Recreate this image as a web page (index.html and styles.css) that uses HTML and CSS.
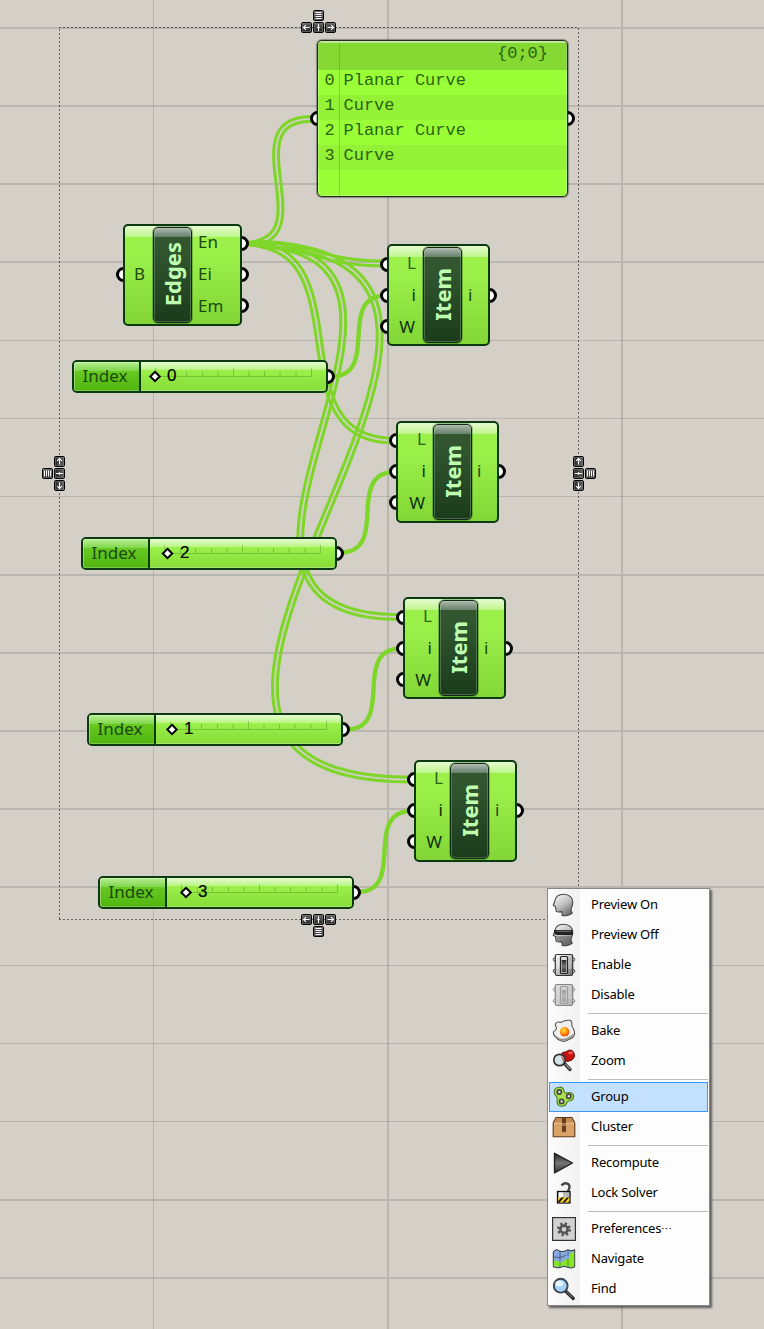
FILE: index.html
```html
<!DOCTYPE html>
<html lang="en">
<head>
<meta charset="utf-8">
<title>Definition canvas</title>
<link rel="stylesheet" href="styles.css">
</head>
<body>
<svg class="defs" width="0" height="0" aria-hidden="true">
  <defs>
    <linearGradient id="keyfill" x1="0" y1="0" x2="0" y2="1"><stop offset="0" stop-color="#6a6a6a"/><stop offset="1" stop-color="#222"/></linearGradient>
    <linearGradient id="grey" x1="0" y1="0" x2="1" y2="1"><stop offset="0" stop-color="#fff"/><stop offset=".4" stop-color="#cfcfcf"/><stop offset="1" stop-color="#6e6e6e"/></linearGradient>
    <linearGradient id="skin" x1=".2" y1="0" x2=".8" y2="1"><stop offset="0" stop-color="#f4f4f4"/><stop offset=".45" stop-color="#c4c4c4"/><stop offset="1" stop-color="#666"/></linearGradient>
    <linearGradient id="dark" x1="0" y1="0" x2="0" y2="1"><stop offset="0" stop-color="#222"/><stop offset=".5" stop-color="#777"/><stop offset="1" stop-color="#333"/></linearGradient>
    <radialGradient id="yolk" cx=".4" cy=".35" r=".65"><stop offset="0" stop-color="#ffe13a"/><stop offset=".5" stop-color="#ff9a10"/><stop offset="1" stop-color="#f04a08"/></radialGradient>
    <g id="key"><rect x=".5" y=".5" width="10" height="10" rx="1.2" fill="url(#keyfill)" stroke="#000"/><rect x="1.5" y="1.5" width="8" height="8" fill="none" stroke="#777" stroke-width=".6"/></g>
    <g id="arrow" fill="none" stroke="#fff" stroke-width="1.1"><path d="M2.5 5.5H8.5M4.9 3.1L2.5 5.5L4.9 7.9"/></g>
    <g id="bars" stroke="#fff" stroke-width="1"><path d="M2.5 2.5H8.5M2.5 4.5H8.5M2.5 6.5H8.5M2.5 8.5H8.5"/></g>
    <g id="plus"><path d="M5.5 2V9" stroke="#fff"/><path d="M4.2 5.5H6.8" stroke="#fff" stroke-width="1.2"/></g>
    <g id="keys">
      <use href="#key"/><use href="#arrow"/>
      <use href="#key" x="12"/><use href="#plus" x="12"/>
      <use href="#key" x="24"/><use href="#arrow" transform="translate(35 0) scale(-1 1)"/>
    </g>
    <g id="ruler" fill="none" stroke="#3c7a12" stroke-opacity=".34">
      <path d="M.5 9.5H156.5M.5 9V1M78.5 9V1M156.5 9V1M16.5 9V4M31.5 9V4M47.5 9V4M63 9V4M94 9V4M109.5 9V4M125 9V4M141 9V4"/>
    </g>
    <g id="head"><path d="M2.5 9C3.2 4 6.5 1.2 11.5 1.2C17.5 1.2 21 5 20.8 9.8C20.6 13.5 18.8 15 19 17.5L20.3 20.2C17.5 22.8 12.8 23.2 10.2 22.4L9.8 18.6C8 19 5.5 19.4 4.2 18.3L3.4 13.5L1.3 12.3Z" fill="url(#skin)" stroke="#444" stroke-width="1.1"/></g>
    <g id="chip"><circle cx="2.8" cy="6.5" r="1.6" fill="#eee" stroke="#444"/><circle cx="2.8" cy="18" r="1.6" fill="#eee" stroke="#444"/><circle cx="21.2" cy="6.5" r="1.6" fill="#eee" stroke="#444"/><circle cx="21.2" cy="18" r="1.6" fill="#eee" stroke="#444"/><rect x="3.3" y="1.5" width="17.4" height="21" rx="1.8" fill="url(#grey)" stroke="#333" stroke-width="1.2"/><path d="M4.8 7.5H19.2V16H4.8Z" fill="#fff" opacity=".25"/><rect x="8.5" y="3.5" width="7" height="17" rx="1" fill="#ddd" stroke="#222" stroke-width="1.2"/><rect x="9.7" y="7" width="4.6" height="12.3" fill="url(#dark)"/></g>
  </defs>
</svg>

<main class="canvas">
  <svg class="layer" width="764" height="1329" viewBox="0 0 764 1329">
    <g class="grid">
      <path class="thin" d="M153.5 0V1329M0 340.5H764M0 418.5H764M0 496.5H764M0 965.5H764M0 1043.5H764M0 1121.5H764"/>
      <path class="thick" d="M388 0V1329M622 0V1329M0 28H764M0 106H764M0 184H764M0 262H764M0 575H764M0 653H764M0 731H764M0 809H764M0 887H764M0 1200H764M0 1278H764"/>
    </g>
    <path class="marquee" d="M59 27.5H579M59 919.5H579M59.5 29V919M578.5 28V919"/>
    <g id="wires"></g>
    <use href="#keys" x="301" y="22"/><use href="#key" x="313" y="10"/><use href="#bars" x="313" y="10"/>
    <use href="#keys" x="301" y="914"/><use href="#key" x="313" y="926"/><use href="#bars" x="313" y="926"/>
    <use href="#keys" transform="translate(65 456) rotate(90)"/><use href="#key" x="42" y="468"/><use href="#bars" transform="translate(53 468) rotate(90)"/>
    <use href="#keys" transform="translate(584 456) rotate(90)"/><use href="#key" x="585" y="468"/><use href="#bars" transform="translate(596 468) rotate(90)"/>
  </svg>

  <section class="node panel">
    <i class="port in mid"></i><i class="port out mid"></i>
    <div class="sheet">
      <div class="path">{0;0}</div>
      <div class="row"><span class="no">0</span><span>Planar Curve</span></div>
      <div class="row alt"><span class="no">1</span><span>Curve</span></div>
      <div class="row"><span class="no">2</span><span>Planar Curve</span></div>
      <div class="row alt"><span class="no">3</span><span>Curve</span></div>
    </div>
  </section>

  <section class="node comp edges">
    <i class="port in mid"></i><i class="port out p1"></i><i class="port out mid"></i><i class="port out p3"></i>
    <div class="body"><div class="ins"><span>B</span></div><div class="name"><b>Edges</b></div><div class="outs"><span>En</span><span>Ei</span><span>Em</span></div></div>
  </section>

  <section class="node comp item n1">
    <i class="port in p1"></i><i class="port in mid"></i><i class="port in p3"></i><i class="port out mid"></i>
    <div class="body"><div class="ins"><span class="soft">L</span><span>i</span><span>W</span></div><div class="name"><b>Item</b></div><div class="outs"><span>i</span></div></div>
  </section>
  <section class="node comp item n2">
    <i class="port in p1"></i><i class="port in mid"></i><i class="port in p3"></i><i class="port out mid"></i>
    <div class="body"><div class="ins"><span class="soft">L</span><span>i</span><span>W</span></div><div class="name"><b>Item</b></div><div class="outs"><span>i</span></div></div>
  </section>
  <section class="node comp item n3">
    <i class="port in p1"></i><i class="port in mid"></i><i class="port in p3"></i><i class="port out mid"></i>
    <div class="body"><div class="ins"><span class="soft">L</span><span>i</span><span>W</span></div><div class="name"><b>Item</b></div><div class="outs"><span>i</span></div></div>
  </section>
  <section class="node comp item n4">
    <i class="port in p1"></i><i class="port in mid"></i><i class="port in p3"></i><i class="port out mid"></i>
    <div class="body"><div class="ins"><span class="soft">L</span><span>i</span><span>W</span></div><div class="name"><b>Item</b></div><div class="outs"><span>i</span></div></div>
  </section>

  <section class="node slider s1">
    <i class="port out mid"></i>
    <div class="body"><div class="tag">Index</div><div class="track"><svg width="185" height="31" viewBox="0 0 185 31"><use href="#ruler" x="14" y="6"/><path class="knob" d="M14 10.8L18.7 15.5L14 20.2L9.3 15.5Z"/><text x="26" y="20">0</text></svg></div></div>
  </section>
  <section class="node slider s2">
    <i class="port out mid"></i>
    <div class="body"><div class="tag">Index</div><div class="track"><svg width="185" height="31" viewBox="0 0 185 31"><use href="#ruler" x="14" y="6"/><path class="knob" d="M17.5 10.8L22.2 15.5L17.5 20.2L12.8 15.5Z"/><text x="30" y="20">2</text></svg></div></div>
  </section>
  <section class="node slider s3">
    <i class="port out mid"></i>
    <div class="body"><div class="tag">Index</div><div class="track"><svg width="185" height="31" viewBox="0 0 185 31"><use href="#ruler" x="14" y="6"/><path class="knob" d="M16 10.8L20.7 15.5L16 20.2L11.3 15.5Z"/><text x="28" y="20">1</text></svg></div></div>
  </section>
  <section class="node slider s4">
    <i class="port out mid"></i>
    <div class="body"><div class="tag">Index</div><div class="track"><svg width="185" height="31" viewBox="0 0 185 31"><use href="#ruler" x="14" y="6"/><path class="knob" d="M19 10.8L23.7 15.5L19 20.2L14.3 15.5Z"/><text x="31" y="20">3</text></svg></div></div>
  </section>

  <nav class="menu">
    <div class="mi"><svg viewBox="0 0 24 24"><use href="#head"/></svg><span>Preview On</span></div>
    <div class="mi"><svg viewBox="0 0 24 24"><use href="#head"/><path d="M2 7H20.8V12H5Q3 12 2 10Z" fill="#222"/><path d="M4.5 8.3H19" stroke="#777"/><path d="M3.8 13H19.7Q18.3 15.5 19 17.8L20 20Q15 23 10.4 22L10 18.2L4.6 17.8Z" fill="#555" opacity=".45"/></svg><span>Preview Off</span></div>
    <div class="mi"><svg viewBox="0 0 24 24"><use href="#chip"/></svg><span>Enable</span></div>
    <div class="mi"><svg viewBox="0 0 24 24" opacity=".58"><use href="#chip"/><rect x="4" y="2" width="16" height="20" fill="#999" opacity=".5"/></svg><span>Disable</span></div>
    <hr>
    <div class="mi"><svg viewBox="0 0 24 24"><path d="M3.5 4.5Q5 2.2 9 3.4Q13 .8 18 1.3Q20.5 2 19.8 7Q22.8 11 22.6 15Q21.5 19 17.5 20Q13 23.5 9 21.8Q5.5 21 4.4 18.5Q1 16.5 1.4 13Q5 11 4.3 8.5Q3 6.5 3.5 4.5Z" fill="#f0f0f0" stroke="#555" stroke-width="1.1"/><path d="M2 15Q5 19 10 19.8Q15 20.5 21.5 14.5Q21 18 17 19.3Q13 22.7 9 21Q3 18.5 2 15Z" fill="#8c8c8c"/><circle cx="12.6" cy="12.8" r="4.8" fill="url(#yolk)"/></svg><span>Bake</span></div>
    <div class="mi"><svg viewBox="0 0 24 24"><path d="M9 6Q10 2.5 13.5 3Q17 .3 19.5 1.3Q23 3 22.3 8Q21 11.5 16.5 12.3Q10.5 13 9 6Z" fill="#c81212" stroke="#5d0808"/><ellipse cx="18.7" cy="3.9" rx="2.4" ry="1.4" fill="#ee5c50"/><path d="M12 14L18 20.5" stroke="#444" stroke-width="3.4" stroke-linecap="round"/><path d="M13.5 15L18 20" stroke="#aaa" stroke-width="1"/><circle cx="7.5" cy="11" r="5.7" fill="#c7dce5" fill-opacity=".8" stroke="#333" stroke-width="1.7"/><path d="M10.5 7.5L12.2 13Q9.8 12 10.5 7.5Z" fill="#b33"/></svg><span>Zoom</span></div>
    <hr>
    <div class="mi on"><svg viewBox="0 0 24 24"><path d="M7 2.2Q11.3 1.6 12 6.3Q12.6 8.7 15.5 7.7Q20.8 6.8 21.6 11.2Q21.7 15.2 17.8 15.8Q15.3 16 14.5 18.3Q13 21.8 9 21.2Q4.5 20.5 5.1 16.2Q5.8 13 4.2 11.2Q1.2 8 2.7 4.6Q4 2.3 7 2.2Z" fill="#a9e34b" stroke="#4c7a1a" stroke-width="1.1"/><g fill="#ddd" stroke="#444" stroke-width="1.7"><circle cx="7.3" cy="7" r="2.1"/><circle cx="16.8" cy="11.3" r="2.1"/><circle cx="9.6" cy="16.4" r="2.1"/></g></svg><span>Group</span></div>
    <div class="mi"><svg viewBox="0 0 24 24"><path d="M4 2.5H20L22.8 8V21.7H1.2V8Z" fill="#c98f56" stroke="#5f3a18" stroke-width="1.1"/><path d="M4.4 3.2H19.6L22 8H2Z" fill="#c48a50"/><path d="M1.8 8.2H22.2" stroke="#f0cd9f" stroke-width="1"/><path d="M2 9H22V21H2Z" fill="#d9a267"/><path d="M10 2.8H14V16L13 17.5L12 16.5L11 17.5L10 16.5Z" fill="#6b3f1c"/><path d="M10 8H14V11H10Z" fill="#a97850"/></svg><span>Cluster</span></div>
    <hr>
    <div class="mi"><svg viewBox="0 0 24 24"><path d="M2.5 2.3L20.5 12L2.5 21.8Z" fill="url(#dark)" stroke="#222" stroke-width="1.4" stroke-linejoin="round"/></svg><span>Recompute</span></div>
    <div class="mi"><svg viewBox="0 0 24 24"><path d="M9.5 4.5Q12.5 .5 16.5 3.3Q18.8 5.8 15.8 10.5" fill="none" stroke="#444" stroke-width="2.4"/><rect x="5.5" y="10.5" width="12.5" height="11.5" fill="#bbb" stroke="#111" stroke-width="1.3"/><path d="M7 11.5H11V16H7Z" fill="#fff"/><path d="M6.2 16.5H17.4V21.4H6.2Z" fill="#ffd11a"/><path d="M6.2 20L9.5 16.5H12L7.5 21.4H6.2ZM10.3 21.4L15 16.5H17.2L12.7 21.4ZM15.8 21.4L17.4 19.5V21.4Z" fill="#111"/></svg><span>Lock Solver</span></div>
    <hr>
    <div class="mi"><svg viewBox="0 0 24 24"><rect x=".6" y=".6" width="22.8" height="22.8" fill="#d2d2d2" stroke="#333" stroke-width="1.2"/><circle cx="12" cy="12.3" r="5.7" fill="none" stroke="#555" stroke-width="2.6" stroke-dasharray="2.24 2.237"/><circle cx="12" cy="12.3" r="3.7" fill="none" stroke="#555" stroke-width="2.6"/></svg><span>Preferences<small>⋯</small></span></div>
    <div class="mi"><svg viewBox="0 0 24 24"><path d="M1.3 4.5L4.5 2.5Q8 5 11.8 4.5Q16 1.5 19 3.8L22.7 2.7V19.8Q20 21.8 16.2 20.5Q12 18 8.5 20.5Q5.5 21.5 1.3 19.8Z" fill="#86a9e4" stroke="#333"/><path d="M1.8 14.5Q4.5 12 8 15.5Q11 16 12.5 12.5Q17 14 17.5 8.5Q18 5 22.2 5V19.3Q19 21 16.4 19.8Q12 17.4 8.3 19.8L1.8 19.3Z" fill="#86e526"/><path d="M8 4.5V14M2 9.7Q8 12 14 8M16 3V9" stroke="#345" fill="none" stroke-width=".7"/><path d="M8 15.5V19.8M16 12V19.8" stroke="#3c8a12" fill="none" stroke-width=".8"/></svg><span>Navigate</span></div>
    <div class="mi"><svg viewBox="0 0 24 24"><path d="M13.5 14L21.3 21.5" stroke="#222" stroke-width="3.2" stroke-linecap="round"/><path d="M14.5 14.8L20.5 20.7" stroke="#999" stroke-width="1"/><circle cx="8.7" cy="8.7" r="6.9" fill="#a6d2fa" stroke="#3c4650" stroke-width="1.9"/><ellipse cx="7.3" cy="6.6" rx="3.8" ry="2.8" fill="#e6f5ff"/></svg><span>Find</span></div>
  </nav>
</main>
<script src="wires.js"></script>
</body>
</html>
```
FILE: styles.css
```css
body { margin: 0; font-family: "Noto Sans", "Open Sans", sans-serif; }
.defs { position: absolute; }
.canvas { position: relative; width: 764px; height: 1329px; background: #d4d0c8; overflow: hidden; }
.layer { position: absolute; left: 0; top: 0; }
.grid path { fill: none; stroke: #000; stroke-opacity: .12; }
.grid .thick { stroke-width: 2; }
.marquee { fill: none; stroke: #000; stroke-opacity: .52; stroke-dasharray: 2 2; }
.wire { fill: none; stroke: #7fd62a; stroke-width: 3.1; }
.wire.single { stroke-width: 4.4; }

/* nodes */
.node { position: absolute; z-index: 0; }
.port { position: absolute; z-index: -1; box-sizing: border-box; width: 15px; height: 15px; border: 3px solid #000; border-radius: 50%; background: #fff; }
.port.in { left: -7px; }
.port.out { right: -7px; }
.port.mid { top: calc(50% - 7.5px); }
.port.p1 { top: 12px; }
.port.p3 { top: 74px; }
.comp .port.mid { top: 43px; }
.n1 .port, .n3 .port { margin-top: 1px; }

.panel { left: 317px; top: 40px; width: 251px; height: 157px; }
.sheet { box-sizing: border-box; height: 100%; border: 1.5px solid #222c1c; border-radius: 5px; overflow: hidden; font: 17px/25px "Liberation Mono", monospace; color: #2a6410;
  background: linear-gradient(90deg, transparent 21px, rgba(60,120,20,.28) 21px, rgba(60,120,20,.28) 22px, transparent 22px), #9aff36;
  box-shadow: inset 0 0 0 1px rgba(255,255,255,.25), 0 0 1px 1px rgba(0,0,0,.35); }
.path { height: 29px; line-height: 25px; padding-right: 19px; text-align: right; background: rgba(80,110,40,.27); box-shadow: inset 0 2px 0 rgba(255,255,255,.45); }
.row { display: flex; gap: 8px; height: 25px; line-height: 22px; padding-left: 6.5px; }
.row.alt { background: rgba(90,130,50,.1); }
.no { width: 11px; }

.comp { height: 102px; font-size: 17px; color: #1d4a10; }
.body { box-sizing: border-box; height: 100%; border: 2px solid #0b3a10; border-radius: 5px; overflow: hidden; }
.comp .body { display: grid; padding: 1px 0;
  background: linear-gradient(#e6fcd2 0, #bdf58a 11px, #9bf04a 11px, #9bf04a 30%, #82d636); }
.ins, .outs { display: flex; flex-direction: column; justify-content: space-around; line-height: 31px; margin: -2px 0 2px; }
.n1 .ins, .n1 .outs, .n3 .ins, .n3 .outs { margin: -1px 0 1px; }
.item .ins { text-align: right; padding-right: 7px; color: #12300a; }
.ins .soft { color: #2d6412; }
.item .ins span:last-child { margin-right: 1px; }
.outs { padding-left: 6px; }
.edges { left: 123px; top: 224px; width: 119px; }
.edges .body { grid-template-columns: 28px 39px 1fr; }
.edges .ins { padding-left: 9px; }
.item { width: 103px; }
.item .body { grid-template-columns: 34px 39px 1fr; }
.n1 { left: 387px; top: 244px; }
.n2 { left: 396px; top: 421px; }
.n3 { left: 403px; top: 597px; }
.n4 { left: 414px; top: 760px; }
.n2 .body { grid-template-columns: 35px 39px 1fr; }
.n2 .outs { padding-left: 5px; }
.edges .ins { width: 19px; }
.name { display: flex; align-items: center; justify-content: center; border: 1.5px solid #0d2a10; border-radius: 5px; color: #beffb0;
  background: linear-gradient(#b0b9b0 0, #65806a 9px, #33562f 9px, #31552f 25%, #1b3c1b);
  box-shadow: inset 0 0 0 1px rgba(190,220,190,.28), 0 0 0 1px rgba(20,60,10,.3); }
.name b { writing-mode: vertical-rl; transform: rotate(180deg); font-size: 22px; line-height: 30px; margin: 0 2px 2px 0; }

.slider { width: 256px; height: 33px; }
.tag { box-sizing: border-box; flex: none; width: 67px; border-right: 2px solid #0b3a10; text-align: center; font-size: 17px; line-height: 28px; color: #174a0c; padding-right: 3px;
  background: linear-gradient(#b6ef90 0, #7fd64c 9px, #67c922 9px, #52b50f);
  box-shadow: inset 1px 1px 0 rgba(255,255,255,.35), inset 0 -1px 0 rgba(255,255,255,.25); }
.slider .body { display: flex; }
.track { flex: 1; background: linear-gradient(#e6fcd2 0, #b9f483 8px, #9bf04a 8px, #86dc38); box-shadow: inset 0 -1px 0 rgba(255,255,255,.3); }
.track svg { display: block; margin-top: -1px; }
.track text { font: 17px "Liberation Sans", Arial, sans-serif; fill: #000; stroke: #000; stroke-width: .2; }
.knob { fill: #fff; stroke: #000; stroke-width: 2; }
.s1 { left: 72px; top: 360px; }
.s2 { left: 81px; top: 537px; }
.s3 { left: 87px; top: 713px; }
.s4 { left: 98px; top: 876px; }

/* context menu */
.menu { position: absolute; z-index: 2; left: 547px; top: 888px; width: 163px; height: 418px; box-sizing: border-box; padding: 1px; border: 1px solid #868986;
  background: linear-gradient(90deg, #fcfcfc 1px, #f1f1f1 32px, #fdfdfd 32px); box-shadow: 2px 2px 2px rgba(0,0,0,.55); font-size: 13px; letter-spacing: -.2px; color: #000; }
.mi { display: flex; align-items: center; gap: 15px; box-sizing: border-box; height: 30px; padding-left: 3px; line-height: 28px; }
.mi.on { background: #c4e0ff; box-shadow: inset 0 0 0 1px #3399ff; }
.mi svg { width: 24px; height: 24px; flex: none; }
.mi span { white-space: nowrap; height: 30px; }
.mi small { font-size: 11px; line-height: 1; }
.menu hr { height: 1px; margin: 3px 0 2px 39px; border: 0; background: #bdbdbd; }
```
FILE: wires.js
```js
// Each wire is a cubic with horizontal handles: x0, y0, x1, y1, handle length, double?
const wires = [
  [246, 243.5, 312, 119, 83, true],
  [246, 243.5, 386, 263.5, 70, true],
  [246, 243.5, 394, 440.5, 122, true],
  [244, 243.5, 401, 617, 264, true],
  [245, 243.5, 411, 779.5, 390, true],
  [331, 376.5, 386, 295.5, 50, false],
  [340, 552.5, 395, 472, 50, false],
  [346, 729.5, 401, 648.5, 50, false],
  [357, 892, 412, 811, 50, false]
];

const group = document.getElementById('wires');

function strand([x0, y0, x1, y1, h, double], offset) {
  const lead = double ? 4 : 0;
  const points = [];
  for (let i = 0; i <= 120; i++) {
    const t = i / 120, u = 1 - t;
    const a = 3 * u * u * t, b = 3 * u * t * t, c = t * t * t, s = u * u * u;
    const x = s * x0 + a * (x0 + h) + b * (x1 - h) + c * x1 - lead * a * u;
    const y = (s + a) * y0 + (b + c) * y1;
    const dx = 3 * u * u * h + 6 * u * t * (x1 - x0 - 2 * h) + 3 * t * t * h;
    const dy = 6 * u * t * (y1 - y0);
    const len = Math.hypot(dx, dy) || 1;
    const o = offset * Math.min(1, 0.3 + Math.max(0, x - x0) / 30 + Math.abs(y - y0) / 30);
    points.push((x - dy / len * o).toFixed(2) + ' ' + (y + dx / len * o).toFixed(2));
  }
  return 'M' + points.join('L');
}

for (const wire of wires) {
  for (const offset of wire[5] ? [-2.4, 2.4] : [0]) {
    const path = document.createElementNS('http://www.w3.org/2000/svg', 'path');
    path.setAttribute('class', wire[5] ? 'wire' : 'wire single');
    path.setAttribute('d', strand(wire, offset));
    group.appendChild(path);
  }
}
```
